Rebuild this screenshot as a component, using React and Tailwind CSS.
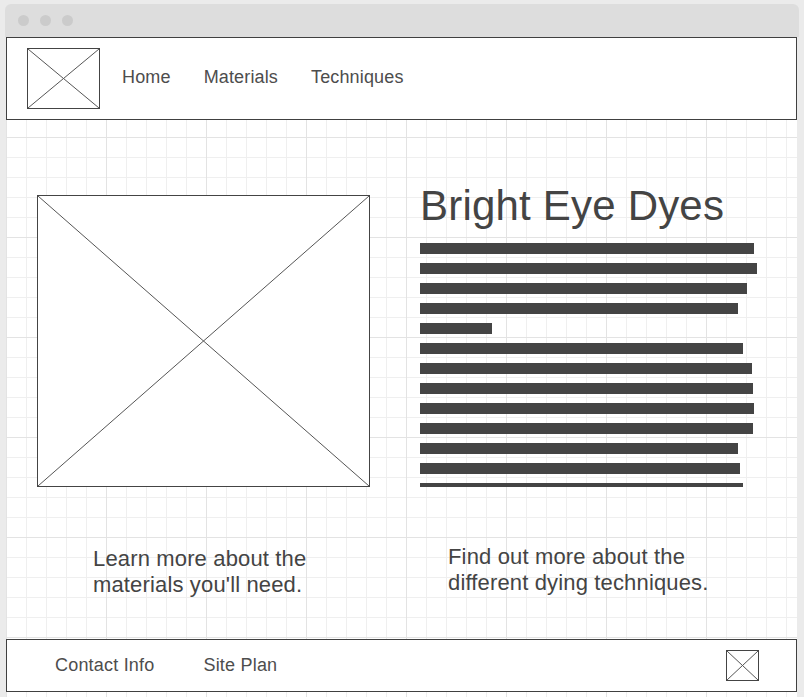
const bars = [334, 337, 327, 318, 72, 323, 332, 333, 334, 333, 318, 320, 323];

const gridBg =
  "bg-white bg-[linear-gradient(to_right,#e3e3e3_1px,transparent_1px),linear-gradient(to_bottom,#e3e3e3_1px,transparent_1px),linear-gradient(to_right,#efefef_1px,transparent_1px),linear-gradient(to_bottom,#efefef_1px,transparent_1px)] [background-size:100px_100px,100px_100px,20px_20px,20px_20px]";

function Placeholder({ className }) {
  return (
    <div className={`relative shrink-0 border border-[#444] bg-white ${className}`}>
      <svg className="absolute inset-0 h-full w-full" preserveAspectRatio="none" viewBox="0 0 100 100">
        <line x1="0" y1="0" x2="100" y2="100" stroke="#555" strokeWidth="1" vectorEffect="non-scaling-stroke" />
        <line x1="100" y1="0" x2="0" y2="100" stroke="#555" strokeWidth="1" vectorEffect="non-scaling-stroke" />
      </svg>
    </div>
  );
}

export default function App() {
  return (
    <div className="h-[697px] w-[804px] overflow-hidden bg-[#ebebeb] pt-[4px] font-['Liberation_Sans',Arial,sans-serif] text-[#444]">
      <div className="mx-[5px] flex h-[33px] items-center gap-[11px] rounded-t-[6px] bg-[#dddddd] pl-[13px]">
        <span className="h-[11px] w-[11px] rounded-full bg-[#cbcbcb]" />
        <span className="h-[11px] w-[11px] rounded-full bg-[#cbcbcb]" />
        <span className="h-[11px] w-[11px] rounded-full bg-[#cbcbcb]" />
      </div>

      <div className={`ml-[6px] h-[660px] w-[791px] ${gridBg}`}>
        <header className="flex h-[83px] items-center border border-[#404040] bg-white pl-[20px]">
          <Placeholder className="h-[61px] w-[73px]" />
          <nav className="mb-[2px] ml-[22px] flex gap-[33px] text-[18px] tracking-[0.15px] text-[#4d4d4d]">
            <a>Home</a>
            <a>Materials</a>
            <a>Techniques</a>
          </nav>
        </header>

        <main className="h-[519px]">
          <div className="flex pl-[31px] pt-[65px]">
            <Placeholder className="mt-[10px] h-[292px] w-[333px]" />
            <div className="ml-[50px] w-[337px]">
              <h1 className="text-[42px] leading-[42px] tracking-[0.2px]">Bright Eye Dyes</h1>
              <div className="mt-[16px] flex h-[244px] flex-col gap-[9px] overflow-hidden">
                {bars.map((w, i) => (
                  <div key={i} className="h-[11px] shrink-0 bg-[#444]" style={{ width: w }} />
                ))}
              </div>
            </div>
          </div>

          <div className="flex pl-[31px] text-[22px] leading-[26px] tracking-[0.15px]">
            <p className="mt-[59px] w-[333px] pl-[56px]">
              Learn more about the
              <br />
              materials you'll need.
            </p>
            <p className="ml-[50px] mt-[57px] pl-[28px]">
              Find out more about the
              <br />
              different dying techniques.
            </p>
          </div>
        </main>

        <footer className="flex h-[53px] items-center border border-[#404040] bg-white pl-[48px] pr-[37px] text-[18px] tracking-[0.2px] text-[#4d4d4d]">
          <a>Contact Info</a>
          <a className="ml-[49px]">Site Plan</a>
          <Placeholder className="ml-auto h-[31px] w-[33px]" />
        </footer>
      </div>
    </div>
  );
}
